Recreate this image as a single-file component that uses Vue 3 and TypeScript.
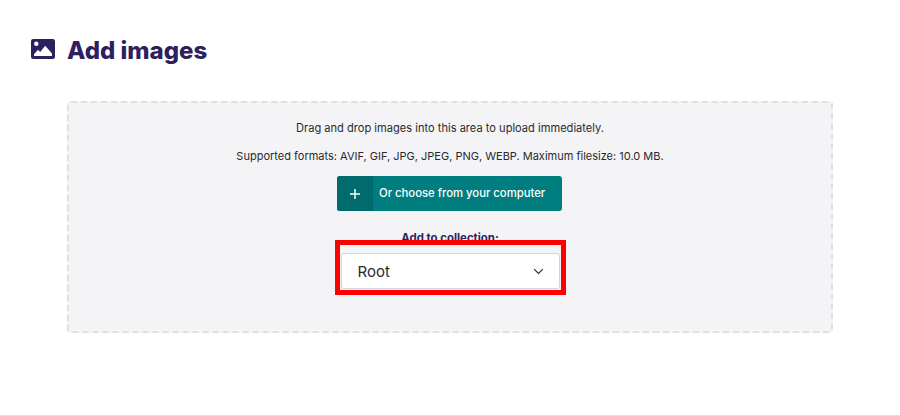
<script setup lang="ts">
const title: string = 'Add images'
</script>

<template>
  <div class="page">
    <header class="head">
      <svg class="icon" viewBox="0 0 24 20" width="24" height="20" aria-hidden="true">
        <path fill="#2e1f5e" fill-rule="evenodd" d="M2.2 0h19.6A2.2 2.2 0 0 1 24 2.2v15.6a2.2 2.2 0 0 1-2.2 2.2H2.2A2.2 2.2 0 0 1 0 17.800V2.200A2.200 2.200 0 0 1 2.200 0ZM5.300 2.600a2.200 2.200 0 1 0 0 4.400 2.200 2.200 0 0 0 0-4.400ZM3 17h18v-2.500l-6.800-7.800-5 6.300-2.200-2.300L3 15.200Z" />
      </svg>
      <h1>{{ title }}</h1>
    </header>
    <section class="drop">
      <p class="line">Drag and drop images into this area to upload immediately.</p>
      <p class="line last">Supported formats: AVIF, GIF, JPG, JPEG, PNG, WEBP. Maximum filesize: 10.0 MB.</p>
      <button class="btn" type="button">
        <span class="plus">
          <svg viewBox="0 0 10 10" width="10" height="10" aria-hidden="true">
            <path d="M5 0v10M0 5h10" fill="none" stroke="#fff" stroke-width="1.500" />
          </svg>
        </span>
        <span class="btn-text">Or choose from your computer</span>
      </button>
      <div class="collection">
        <label class="lab">Add to collection:</label>
        <div class="select">
          <span>Root</span>
          <svg viewBox="0 0 12 8" width="11" height="7" aria-hidden="true">
            <path d="M1 1.200 6 6.200 11 1.200" fill="none" stroke="#2e1f5e" stroke-width="1.300" />
          </svg>
        </div>
        <div class="mark"></div>
      </div>
    </section>
  </div>
</template>

<style scoped>
.page {
  height: 416px;
  box-sizing: border-box;
  border-bottom: 1px solid #e2e2e5;
  font-family: Inter, "Liberation Sans", sans-serif;
  color: #2e1f5e;
  overflow: hidden;
}
.head {
  display: flex;
  align-items: center;
  gap: 12px;
  height: 36px;
  padding: 32px 0 0 31px;
}
.icon {
  margin-top: -2px;
}
h1 {
  margin: 2px 0 0;
  font-size: 24px;
  font-weight: 800;
  line-height: 36px;
}
.drop {
  box-sizing: border-box;
  width: 766px;
  height: 232px;
  margin: 33px 0 0 67px;
  padding: 18px 0 0;
  display: flex;
  flex-direction: column;
  align-items: center;
  background: #f4f4f6;
  border: 2px dashed #e0e0e2;
  border-radius: 4px;
}
.line {
  margin: 0 0 14px;
  font-size: 11.1px;
  line-height: 14px;
  color: #2a2a2e;
}
.last {
  margin-bottom: 13px;
  font-size: 11px;
}
.btn {
  display: flex;
  align-items: stretch;
  width: 225px;
  height: 35px;
  margin: 0 1px 0 0;
  padding: 0;
  border: 0;
  border-radius: 3px;
  background: #007d7e;
  color: #fff;
  font-family: inherit;
  overflow: hidden;
}
.plus {
  display: flex;
  align-items: center;
  justify-content: center;
  width: 36px;
  background: #006b6c;
}
.btn-text {
  padding-left: 6px;
  font-size: 11.3px;
  font-weight: 500;
  line-height: 35px;
}
.collection {
  position: relative;
  display: flex;
  flex-direction: column;
  align-items: center;
  margin-top: 20px;
}
.lab {
  font-size: 11.4px;
  font-weight: 700;
  line-height: 14px;
  height: 14px;
}
.select {
  box-sizing: border-box;
  display: flex;
  align-items: center;
  justify-content: space-between;
  width: 219px;
  height: 36px;
  margin-top: 8px;
  padding: 0 15px 0 16px;
  background: #fff;
  border: 1px solid #d5d5d9;
  border-radius: 3px;
  font-size: 15px;
  color: #2a2a2e;
}
.mark {
  position: absolute;
  left: -6px;
  right: -6px;
  top: 9px;
  bottom: -6px;
  border: 5px solid #fe0000;
  pointer-events: none;
}
</style>

<style>
html, body { background: #fff; }
</style>
